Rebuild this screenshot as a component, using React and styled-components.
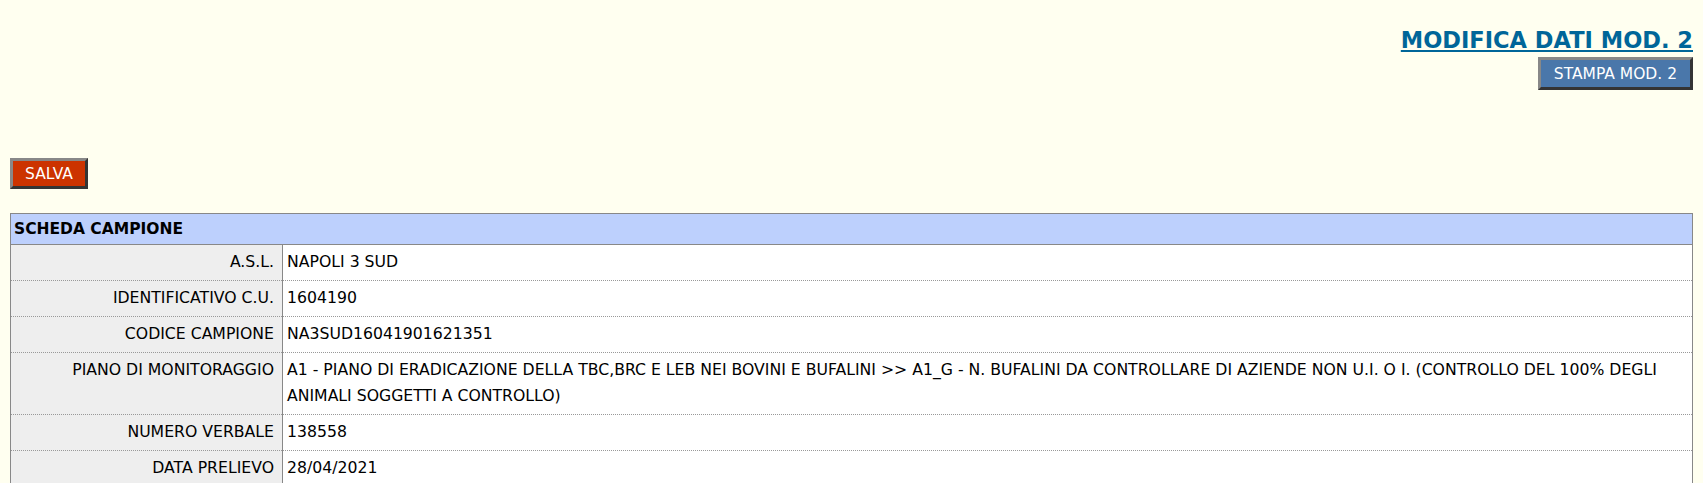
import React from "react";
import styled, { createGlobalStyle } from "styled-components";

const Global = createGlobalStyle`
  html, body { margin: 0; padding: 0; background: #fffff0; }
  body { font-family: "DejaVu Sans", Verdana, sans-serif; color: #000; }
`;

const Page = styled.div`
  padding: 0 10px 10px 10px;
`;

const Header = styled.div`
  display: flex;
  flex-direction: column;
  align-items: flex-end;
  padding-top: 27px;
`;

const Title = styled.a`
  font-size: 22.5px;
  font-weight: bold;
  color: #006699;
  text-decoration: underline;
  line-height: 26px;
`;

const Button = styled.button`
  font-family: "DejaVu Sans", Verdana, sans-serif;
  font-size: 15.5px;
  color: #fff;
  background: ${(p) => p.$bg};
  border: 3px outset #888;
  padding: 0 ${(p) => p.$px}px;
  height: ${(p) => p.$h}px;
  cursor: pointer;
`;

const Toolbar = styled.div`
  margin-top: 68px;
  margin-bottom: 24px;
`;

const Table = styled.table`
  width: 100%;
  border-collapse: collapse;
  border: 1px solid #888;
  font-size: 15.7px;
`;

const HeadCell = styled.th`
  background: #bdd0fd;
  text-align: left;
  font-weight: bold;
  font-size: 15.5px;
  padding: 0 3px;
  height: 30px;
  border-bottom: 1px solid #888;
`;

const Row = styled.tr`
  & + & td { border-top: 1px dotted #999; }
`;

const Label = styled.td`
  background: #eeeeee;
  text-align: right;
  width: 259px;
  padding: 4px 8px 5px 4px;
  border-right: 1px solid #888;
  vertical-align: top;
  line-height: 26px;
  white-space: nowrap;
`;

const Value = styled.td`
  background: #fff;
  padding: 4px 4px 5px 4px;
  vertical-align: top;
  line-height: 26px;
`;

const rows = [
  ["A.S.L.", "NAPOLI 3 SUD"],
  ["IDENTIFICATIVO C.U.", "1604190"],
  ["CODICE CAMPIONE", "NA3SUD16041901621351"],
  [
    "PIANO DI MONITORAGGIO",
    "A1 - PIANO DI ERADICAZIONE DELLA TBC,BRC E LEB NEI BOVINI E BUFALINI >> A1_G - N. BUFALINI DA CONTROLLARE DI AZIENDE NON U.I. O I. (CONTROLLO DEL 100% DEGLI ANIMALI SOGGETTI A CONTROLLO)",
  ],
  ["NUMERO VERBALE", "138558"],
  ["DATA PRELIEVO", "28/04/2021"],
];

export default function App() {
  return (
    <>
      <Global />
      <Page>
        <Header>
          <Title href="#">MODIFICA DATI MOD. 2</Title>
          <Button $bg="#4a77aa" $px={13} $h={33} style={{ marginTop: 4 }}>
            STAMPA MOD. 2
          </Button>
        </Header>
        <Toolbar>
          <Button $bg="#cc3300" $px={12} $h={31}>
            SALVA
          </Button>
        </Toolbar>
        <Table>
          <thead>
            <tr>
              <HeadCell colSpan={2}>SCHEDA CAMPIONE</HeadCell>
            </tr>
          </thead>
          <tbody>
            {rows.map(([l, v]) => (
              <Row key={l}>
                <Label>{l}</Label>
                <Value>{v}</Value>
              </Row>
            ))}
          </tbody>
        </Table>
      </Page>
    </>
  );
}
